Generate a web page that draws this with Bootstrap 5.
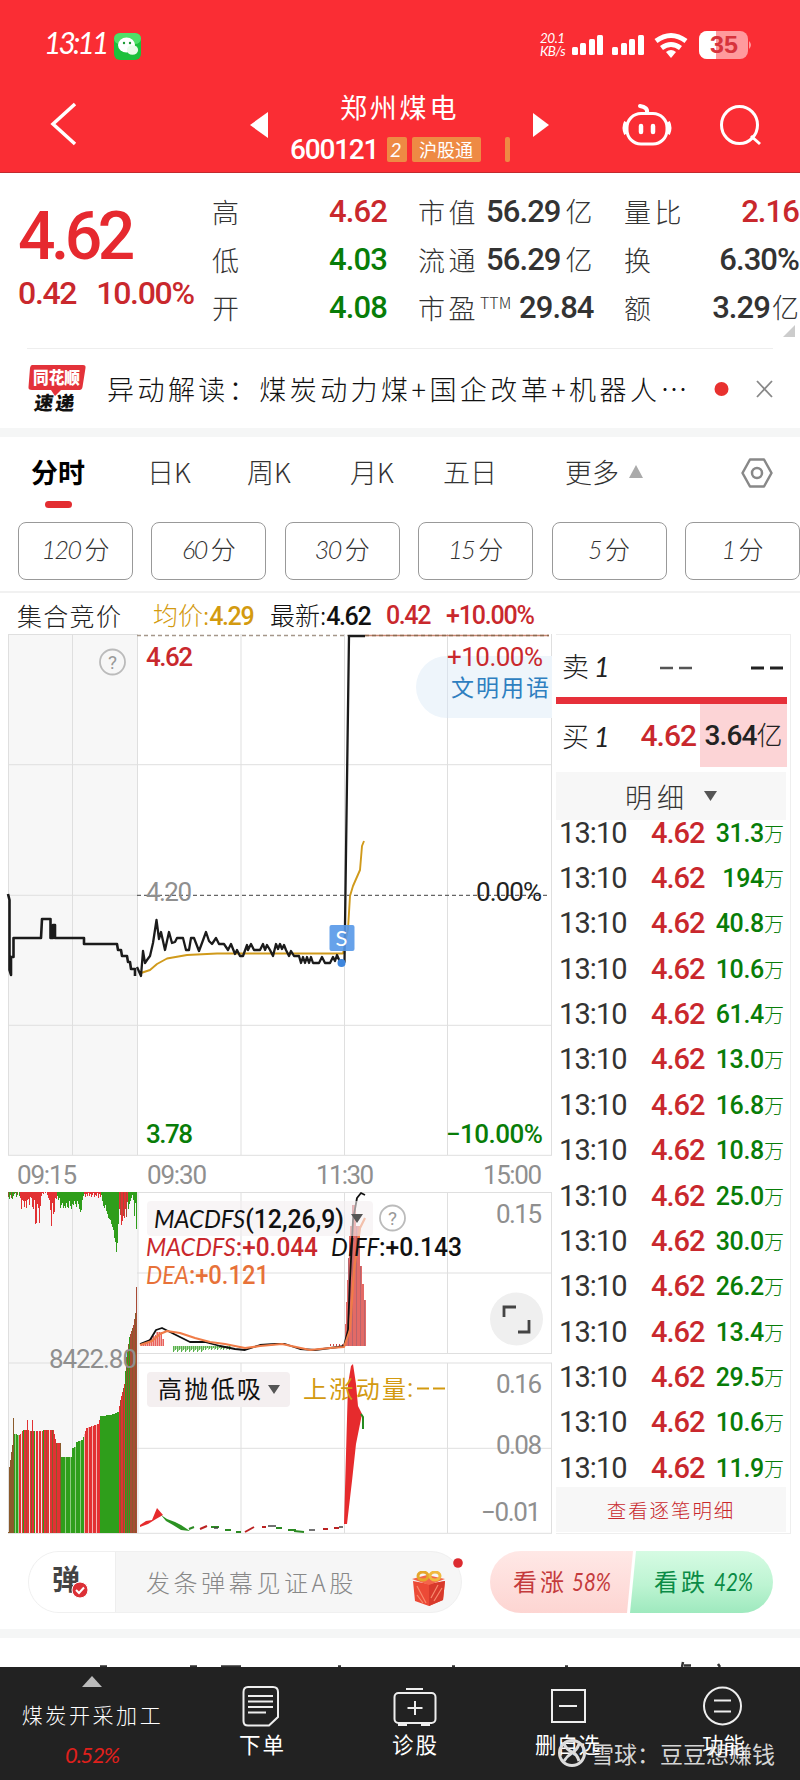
<!DOCTYPE html>
<html lang="zh-CN">
<head>
<meta charset="utf-8">
<meta name="viewport" content="width=device-width, initial-scale=1">
<title>郑州煤电 600121</title>
<link href="https://cdn.jsdelivr.net/npm/bootstrap@5.3.0/dist/css/bootstrap.min.css" rel="stylesheet">
<style>
body{width:800px;height:1780px;overflow:hidden;background:#fff;color:#222;font-family:"Noto Sans CJK SC",sans-serif;font-weight:300;font-size:27px;line-height:1}
svg{display:block;flex:none}
.din{font-family:Roboto,"Noto Sans CJK SC",sans-serif;font-weight:500}
.hand{font-family:Lato,"Noto Sans CJK SC",sans-serif;font-style:italic;font-weight:400}
.up{color:#c9282d}.down{color:#087d08}.gold{color:#d39a10}
.top-red{background:#fa2d34;height:173px;color:#fff;border-bottom:1px solid #c22a2e}
.status-row{height:90px;padding:2px 49px 0 44px}
.title-row{height:83px;position:relative}
.tag{background:#ee8a44;height:25px;font-size:18px;border-radius:2px;overflow:hidden}
.quote{height:175px;padding:16px 0 0 18px;position:relative}
.q-big{font-size:66px;letter-spacing:-4.5px;color:#e6292f;height:72px;padding-top:15px}
.q-sub{font-size:32px;letter-spacing:-1.3px;height:60px;padding-top:16px;white-space:nowrap}
.q-left{width:194px;flex:none}
.q-grid{display:grid;grid-template-columns:117px 89px 206px 80px 95px;grid-auto-rows:48.3px;align-items:center;flex:none;color:#333;white-space:nowrap;margin-top:-2px}
.q-grid .lab{letter-spacing:3.5px}
.q-grid .din{font-size:31px;letter-spacing:-.9px}
.q-grid .din.cn i,.buy i{font-style:normal;font-weight:300;font-size:27px;letter-spacing:0;margin-left:5px}
.corner{position:absolute;left:783px;top:152px}
.rule{height:1px;background:#eee;margin:0 27px}
.notice{height:79px;padding:0 27px 0 27px}
.notice-text{font-size:27px;letter-spacing:3.45px;color:#111;width:584px;margin-left:20px}
.band{height:9px;background:#f5f6f6}
.tabs-row{height:85px;padding:21px 0 0 31px;color:#333;display:grid;grid-template-columns:116px 100px 103px 93px 122px 176px auto}
.tabs-row .on{font-weight:700;color:#000}
.ind{width:27px;height:7px;border-radius:4px;background:#e32d31;margin:16px 0 0 14px}
.period{height:71px;padding-left:18px;gap:18.4px;border-bottom:2px solid #f1f1f1}
.period .btn{width:115px;height:58px;flex:none;border:1px solid #999;border-radius:8px;font-size:25px;color:#333;padding:0 0 5px;line-height:1;font-weight:300}
.period .hand{font-weight:300;letter-spacing:-1.5px;margin-right:4px}
.legend-row{height:41px;padding:3px 0 0 17px;font-size:25px;white-space:nowrap}
.legend-row .din{font-size:25px;letter-spacing:-1.4px}
.main-row{height:900px}
.book{width:235px;margin-left:3px;border:1px solid #eee;border-left:0;height:900px}
.book .r1{height:62px;padding:0 2px 0 6px}
.sellbar{height:7px;background:#e6303a;width:231px}
.buy{height:63px;padding-left:6px;width:231px}
.buy .vol{background:#fcd4d6;width:87px;height:63px;letter-spacing:-.9px;white-space:nowrap;color:#222}
.buy .vol i{margin:0!important;font-size:26px!important}
.dethead{margin-top:5px;height:48px;background:#f7f7f7;width:230px;color:#333}
.trade{height:45.36px;padding:1px 0 0 3px;display:grid;grid-template-columns:92px 57px 76px;align-items:center;font-size:29px;white-space:nowrap}
.trade .t{font-weight:400;color:#333;letter-spacing:-.9px}
.trade .p{letter-spacing:-1px}
.trade .v{font-size:25px;letter-spacing:-.3px;text-align:right}
.trade .v i{font-style:normal;font-weight:300;font-size:20px;letter-spacing:0}
.list{height:681px;margin-top:-10px}
.more{height:45px;background:#f7f7f7;width:230px;font-size:19.5px;letter-spacing:1.9px;margin-top:-4px}
.chat{height:95px;padding:17px 27px 0 28px}
.chat-pill{width:434px;height:62px;border:1px solid #f0f0f0;border-radius:31px;background:#f6f6f6;position:relative}
.chat-l{width:87px;height:60px;background:#fff;border-right:1px solid #eee;border-radius:31px 0 0 31px}
.vote{width:283px;height:62px;margin-left:28px}
.tabbar{height:113px;background:#222;color:#fff;position:relative;font-size:22px}
.tabbar>div{flex:none}
.wm{position:absolute;left:557px;top:71px;color:rgba(255,255,255,.82);font-size:23px;font-weight:400;white-space:nowrap}
</style>
</head>
<body class="d-flex flex-column">
<header class="top-red flex-shrink-0">
  <div class="status-row d-flex align-items-start">
    <span class="hand" style="font-size:30px;padding-top:25px;letter-spacing:-2.900px;width:70px">13:11</span>
    <svg style="margin-top:31px" width="28" height="27" viewBox="0 0 28 27"><rect width="27" height="27" rx="6" fill="#1cc03b"/><rect width="27" height="11" rx="6" fill="#4fe068"/><ellipse cx="12.500" cy="12" rx="8.500" ry="7.600" fill="#fff"/><ellipse cx="18.500" cy="17" rx="5.600" ry="4.800" fill="#eafbea"/><circle cx="10" cy="10" r="1.200" fill="#1a9a33"/><circle cx="16" cy="10" r="1.200" fill="#1a9a33"/></svg>
    <div class="hand ms-auto" style="font-size:13.500px;line-height:13px;padding-top:30px;letter-spacing:-.5px;width:31px">20.1<br>KB/s</div>
    <svg width="180" height="30" viewBox="571 30 180 30" style="margin-top:28px">
      <g fill="#fff"><rect x="572" y="47" width="6" height="8" rx="1.500"/><rect x="580" y="43" width="6" height="12" rx="1.500"/><rect x="589" y="39" width="6" height="16" rx="1.500"/><rect x="597" y="35" width="6" height="20" rx="1.500"/><rect x="612" y="47" width="6" height="8" rx="1.500"/><rect x="621" y="43" width="6" height="12" rx="1.500"/><rect x="629" y="39" width="6" height="16" rx="1.500"/><rect x="638" y="35" width="6" height="20" rx="1.500"/><path d="M671 58l-5-6q5-4 10 0z"/></g>
      <g fill="none" stroke="#fff" stroke-width="5"><path d="M656 41q15-11 30 0M661.500 48q9.500-7 19 0"/></g>
      <rect x="699" y="31" width="49" height="28" rx="8" fill="#ff9a9d"/><path d="M716 31h-9a8 8 0 0 0-8 8v12a8 8 0 0 0 8 8h9z" fill="#fff"/><path d="M749 41q4 4 0 8z" fill="#ff9a9d"/>
      <text x="710" y="53" font-family="Liberation Sans" font-weight="700" font-size="23" textLength="28" lengthAdjust="spacingAndGlyphs" fill="#d7333c">35</text>
    </svg>
  </div>
  <div class="title-row d-flex">
    <svg width="290" height="83" viewBox="0 90 290 83"><path d="M75 104L53 124L75 144" fill="none" stroke="#fff" stroke-width="3.500"/><path d="M268 112V138L250 125z" fill="#fff"/></svg>
    <div style="width:230px">
      <div style="font-size:27px;letter-spacing:2.800px;padding:3px 0 0 50px;font-weight:400">郑州煤电</div>
      <div class="d-flex align-items-center" style="margin-top:17px;height:25px">
        <span class="din" style="font-size:28px;letter-spacing:-1.200px;width:97px">600121</span>
        <span class="tag hand" style="width:20px;padding:2px 0 0 3px;font-size:20px">2</span>
        <span class="tag" style="width:69px;margin-left:5px;padding:3px 0 0 7px;font-weight:400">沪股通</span>
        <span class="tag" style="width:5px;margin-left:24px"></span>
      </div>
    </div>
    <svg width="280" height="83" viewBox="520 90 280 83"><path d="M533 113V137L549 125z" fill="#fff"/>
      <g fill="none" stroke="#fff" stroke-width="3"><rect x="627" y="113.500" width="40" height="30.500" rx="14"/><path d="M647 113q1-6-7-7" stroke-width="4" stroke-linecap="round"/><path d="M626 122q-3 6 0 12M668 122q3 6 0 12" stroke-width="4"/><path d="M641 126v6M653 126v6" stroke-width="4.500" stroke-linecap="round"/><ellipse cx="739.500" cy="125" rx="18" ry="18.500"/><path d="M751 136l9 8"/></g></svg>
  </div>
</header>

<section class="quote d-flex flex-shrink-0">
  <div class="q-left"><div class="q-big din">4.62</div><div class="q-sub din up">0.42<span style="margin-left:20px">10.00%</span></div></div>
  <div class="q-grid">
    <span>高</span><span class="din up">4.62</span><span class="d-flex align-items-center"><span class="lab">市值</span><b class="din cn" style="margin-left:7px">56.29<i>亿</i></b></span><span class="lab">量比</span><span class="din up text-end">2.16</span>
    <span>低</span><span class="din down">4.03</span><span class="d-flex align-items-center"><span class="lab">流通</span><b class="din cn" style="margin-left:7px">56.29<i>亿</i></b></span><span>换</span><span class="din text-end">6.30%</span>
    <span>开</span><span class="din down">4.08</span><span class="d-flex align-items-center"><span class="lab">市盈</span><span style="font-size:16px;margin:-12px 0 0 1px;width:39px">TTM</span><b class="din">29.84</b></span><span>额</span><span class="din cn text-end">3.29<i style="margin-left:2px">亿</i></span>
  </div>
  <svg class="corner" width="12" height="12" viewBox="0 0 12 12"><path d="M12 0V12H0z" fill="#ccc"/></svg>
</section>
<div class="rule flex-shrink-0"></div>
<section class="notice d-flex align-items-center flex-shrink-0">
  <svg width="60" height="50" viewBox="0 0 60 50"><path d="M5 1h51q3 0 2.500 3l-3 19q-.5 3-3 3H34l-6 6-4-6H5q-4 0-3.500-3L3 4q.5-3 2-3z" fill="#e3323a"/><text x="6" y="20" font-size="17" font-weight="900" textLength="47" lengthAdjust="spacingAndGlyphs" fill="#fff">同花顺</text><text transform="skewX(-8)" x="13" y="46" font-size="19" font-weight="900" textLength="40" fill="#111">速递</text></svg>
  <span class="notice-text text-nowrap">异动解读：煤炭动力煤+国企改革+机器人<span style="letter-spacing:0">…</span></span>
  <svg width="64" height="20" viewBox="0 0 64 20" style="margin-left:24px"><circle cx="10.500" cy="10" r="7" fill="#e8312f"/><path d="M46 2l15 16M61 2L46 18" stroke="#888" stroke-width="1.800"/></svg>
</section>
<div class="band flex-shrink-0"></div>
<nav class="tabs-row flex-shrink-0">
  <div class="on">分时<div class="ind"></div></div><div>日K</div><div>周K</div><div>月K</div><div>五日</div>
  <div class="d-flex">更多<svg width="14" height="14" viewBox="0 0 14 14" style="margin:7px 0 0 10px"><path d="M7 0l7 13H0z" fill="#aaa"/></svg></div>
  <svg width="32" height="30" viewBox="0 0 32 30"><path d="M9 1.500h14L30.500 15 23 28.500H9L1.500 15z" fill="none" stroke="#888" stroke-width="2.500" stroke-linejoin="round"/><circle cx="16" cy="15" r="5" fill="none" stroke="#888" stroke-width="2.500"/></svg>
</nav>
<div class="period d-flex flex-shrink-0">
  <button class="btn"><span class="hand">120</span>分</button><button class="btn"><span class="hand">60</span>分</button><button class="btn"><span class="hand">30</span>分</button><button class="btn"><span class="hand">15</span>分</button><button class="btn"><span class="hand">5</span>分</button><button class="btn"><span class="hand">1</span>分</button>
</div>
<div class="legend-row d-flex align-items-center flex-shrink-0">
  <span style="width:136px;letter-spacing:1.300px">集合竞价</span><span class="gold" style="width:117px">均价:<b class="din">4.29</b></span><span style="width:116px;color:#111">最新:<b class="din">4.62</b></span><span class="din up" style="width:60px">0.42</span><span class="din up" style="letter-spacing:-1.200px">+10.00%</span>
</div>

<main class="main-row d-flex flex-shrink-0">
<svg id="chart" width="553" height="900" viewBox="0 634 553 900" font-family="Roboto,'Noto Sans CJK SC'" font-weight="400" font-size="26">
  <path d="M8 634.500H137.500V1155H8zM8 1192H137.500V1533.500H8z" fill="#f7f7f7"/>
  <g fill="none" stroke="#dfdfdf" stroke-width="1"><path d="M8.500 634V1155M72.500 634V1155M137.500 634V1155M241 634V1155M344.500 634V1155M447.500 634V1155M551.500 634V1155M8 634.500H137M8 764.700H552M8 895.300H137M8 1025.300H552M8 1155.300H552"/>
  <path d="M8.500 1192V1533M72.500 1192V1533M241 1192V1353M344.500 1192V1353M447.500 1192V1353M551.500 1192V1353M137 1192.500H552M137 1273H552M137 1353.500H552M8 1363H552M241 1363V1533M344.500 1363V1533M447.500 1363V1533M551.500 1363V1533M137 1448.300H552M8 1533.300H552"/></g>
  <path d="M552 656H447a31 31 0 0 0 0 62H552z" fill="#eef5fb"/><path d="M447.500 656V718" stroke="#dbe2ea"/>
  <path d="M137 635.500H349" stroke="#a5978a" stroke-width="1.500" stroke-dasharray="4 3"/><path d="M365 635.500H549" stroke="#c98873" stroke-width="1.500"/><path d="M365 635.500H549" stroke="#8d6b50" stroke-width="1.500" stroke-dasharray="4 3"/>
  <path d="M137 895.300H549" stroke="#666" stroke-width="1.200" stroke-dasharray="4 3"/>
  <g id="bars" shape-rendering="crispEdges"></g>
  <path d="M138 1192V1533" stroke="#dfdfdf"/>
  <g fill="none" stroke-linejoin="round">
    <path stroke="#d09a1b" stroke-width="1.900" d="M141 973L150 970 157 964 167 958.500 187 955 217 953.500H343L348 929 350 896 353 886 360 870 362 846 364 841"/>
    <path stroke="#1b1b1b" stroke-width="2.600" d="M8 894L9.500 900V970L11 975V957H13.500V938H41L42 919H50.500V938H53V925H55V938H84V944H117L118 950H121L122 956H127L128 962H130L131 969H135V976"/>
    <path stroke="#1b1b1b" stroke-width="2.300" d="M137 967L141 976 143 951 145 963 147 960 150 956 153 943 156.500 920 159 939 161 932 165 950 169 932 172 943 175 942 177 938H183L186 950H189L191 938H194L199 951 202 943 206 932 209 941 212 944 216 938 219 944H224L228 950 231 944 235 954 237 950 240 956H243L247 945 248 950 251 944 254 950H260L263 944 265 950 267 945 270 950 273 956 276 944 278 949 280 944 282 949 284 945 286 950 289 956 291 951 294 956H299L301 963 303 957 305 963 307 957 309 963 311 957 313 963H319L322 957 325 963H330L333 957 335 961 337 955 340 962H344.500L349 636H365"/>
    <path stroke="#111" stroke-width="1.800" d="M140 1344L150 1340 156 1330 162 1328 170 1332 180 1337 190 1342 205 1342 220 1346 235 1349 245 1350 260 1345 275 1344 285 1344 300 1349 315 1350 338 1347 344 1346 348 1330 350 1280 353 1220 357 1198 361 1193 365 1195"/>
    <path stroke="#f07c48" stroke-width="2.200" d="M140 1345L152 1341 160 1334 167 1331 180 1333 195 1338 210 1342 225 1344 245 1348 260 1346 282 1344 296 1347 310 1350 330 1348 344 1347 350 1330 354 1270 360 1228 365 1218"/>
  </g>
  <path d="M140 1525l6-4 6-1 5-12 6 7-7 4-8 5-8 3zM344 1524l4-140 3-18 2-2 3 20 2 22 4 8-6 30-4 37-5 43z" fill="#e62b2d"/>
  <path d="M161 1515l6 4 8 3 6 3 9 6-9-1-8-5-7-4z" fill="#2b9222"/><path d="M361 1414l2 3v12" fill="none" stroke="#268b20" stroke-width="2"/>
  <g fill="none" stroke-width="2"><path stroke="#2b8a22" d="M189 1529l5-2M211 1527h8M225 1530h6M236 1532h5M276 1528h6M288 1530h8M294 1531l10 1"/><path stroke="#b22" d="M200 1529l7-3M245 1532l9-5M262 1527h4M323 1529h5M334 1528h5"/><path stroke="#444" stroke-width="1.400" d="M214 1528h4M268 1526h8M309 1530h6M339 1527h4"/></g>
  <g fill="#8f8f8f"><text x="17" y="1184" textLength="60">09:15</text><text x="147" y="1184" textLength="60">09:30</text><text x="316" y="1184" textLength="58">11:30</text><text x="483" y="1184" textLength="59">15:00</text>
  <text x="146" y="901" textLength="46">4.20</text><text x="496" y="1223" textLength="46">0.15</text><text x="496" y="1393" textLength="46">0.16</text><text x="496" y="1454" textLength="46">0.08</text><text x="481" y="1521" textLength="60">−0.01</text><text x="49" y="1368" textLength="88">8422.80</text></g>
  <g font-weight="500"><text x="146" y="666" textLength="47" fill="#c9282d">4.62</text><text x="146" y="1143" textLength="47" fill="#087d08">3.78</text><text x="446" y="1143" textLength="97" fill="#087d08">−10.00%</text></g>
  <text x="447" y="666" textLength="96" fill="#c9282d">+10.00%</text><text x="476" y="901" textLength="66" fill="#222">0.00%</text>
  <text x="451" y="696" font-size="23" textLength="98" font-weight="400" fill="#2e7fc0">文明用语</text>
  <g fill="none" stroke="#bbb" stroke-width="1.800"><circle cx="112.500" cy="662" r="12.500"/><circle cx="392.500" cy="1218" r="12.500"/></g>
  <g fill="#999" font-size="19" text-anchor="middle"><text x="112.500" y="669">?</text><text x="392.500" y="1225">?</text></g>
  <rect x="329.500" y="925" width="25" height="26" rx="2" fill="#5798e8" fill-opacity=".9"/><text x="335.500" y="946" font-family="Lato" font-size="22" fill="#fff">S</text><circle cx="341.500" cy="963" r="4" fill="#3e86dd"/>
  <g fill="#f4eff0" fill-opacity=".6"><rect x="147" y="1201" width="226" height="35" rx="4"/><rect x="147" y="1372" width="143" height="35" rx="4" fill-opacity="1"/></g>
  <path d="M351 1214h12l-6 9zM268 1385h12l-6 9z" fill="#555"/>
  <text x="154" y="1228" fill="#111" textLength="190" lengthAdjust="spacingAndGlyphs"><tspan font-family="Lato" font-style="italic" font-size="25">MACDFS</tspan><tspan font-weight="500">(12,26,9)</tspan></text>
  <text x="146" y="1256" fill="#c9282d" textLength="172" lengthAdjust="spacingAndGlyphs"><tspan font-family="Lato" font-style="italic" font-size="25">MACDFS</tspan><tspan font-weight="500">:+0.044</tspan></text>
  <text x="331" y="1256" fill="#111" textLength="131" lengthAdjust="spacingAndGlyphs"><tspan font-family="Lato" font-style="italic" font-size="25">DIFF</tspan><tspan font-weight="500">:+0.143</tspan></text>
  <text x="146" y="1284" fill="#e77239" textLength="123" lengthAdjust="spacingAndGlyphs"><tspan font-family="Lato" font-style="italic" font-size="25">DEA</tspan><tspan font-weight="500">:+0.121</tspan></text>
  <text x="158" y="1398" font-size="24" font-weight="400" textLength="103" fill="#111">高抛低吸</text>
  <text x="303" y="1398" font-size="24" textLength="103" fill="#d39a10">上涨动量</text><text x="407" y="1397" fill="#d39a10">:</text><path d="M417 1388.500h12M433 1388.500h12" stroke="#d39a10" stroke-width="2.200"/>
  <circle cx="516.500" cy="1319" r="26.500" fill="#efefef"/><path d="M504 1317V1307H516M518 1332H529V1320" fill="none" stroke="#444" stroke-width="2.800"/>
</svg>
<aside class="book">
  <div class="r1 d-flex align-items-center"><span>卖<span class="hand" style="margin-left:5px">1</span></span>
    <svg width="124" height="4" viewBox="0 0 124 4" style="margin:3px 5px 0 auto"><path d="M1 2h13M20 2h13" stroke="#555" stroke-width="2.500"/><path d="M92 2h13M111 2h13" stroke="#222" stroke-width="3"/></svg></div>
  <div class="sellbar"></div>
  <div class="buy d-flex align-items-center"><span>买<span class="hand" style="margin-left:5px">1</span></span><span class="din up ms-auto" style="font-size:30px;letter-spacing:-1px;padding-right:4px">4.62</span><span class="vol din d-flex align-items-center justify-content-center" style="font-size:28px">3.64<i>亿</i></span></div>
  <div class="dethead d-flex align-items-center" style="padding-left:69px;letter-spacing:5px">明细<svg width="13" height="10" viewBox="0 0 13 10" style="margin-left:15px"><path d="M0 0h13l-6.500 10z" fill="#555"/></svg></div>
  <div class="list" id="list"></div>
  <div class="more d-flex align-items-center justify-content-center up">查看逐笔明细</div>
</aside>
</main>

<section class="chat d-flex flex-shrink-0">
  <div class="chat-pill d-flex align-items-center">
    <div class="chat-l"><svg width="86" height="60" viewBox="29 1552 86 60"><text x="52" y="1590" font-size="28" font-weight="700" fill="#444">弹</text><circle cx="80" cy="1590" r="8" fill="#dc3036" stroke="#fff"/><path d="M76 1590l3 3 5-5.500" fill="none" stroke="#fff" stroke-width="2"/></svg></div>
    <span style="font-size:24px;letter-spacing:3.600px;color:#888;margin-left:30px">发条弹幕见证A股</span>
    <svg width="34" height="36" viewBox="0 0 34 36" style="position:absolute;left:383px;top:19px"><path d="M1 10l16 3 16-3-2 19-14 6-14-5z" fill="#ec4a36"/><path d="M17 13l16-3-2 19-14 6z" fill="#d83a2c"/><path d="M0 8l15-4 18 4-16 6z" fill="#f4644a"/><path d="M22 30l8-13M19 27l7-13M5 15l9 17M5 24l6 8" stroke="#f88a6d" stroke-width="1.200"/><ellipse cx="11" cy="5" rx="5" ry="4" fill="none" stroke="#e5a62c" stroke-width="3"/><ellipse cx="23" cy="5" rx="5" ry="4" fill="none" stroke="#f0b93f" stroke-width="3"/></svg>
    <svg width="10" height="10" viewBox="0 0 10 10" style="position:absolute;left:424px;top:6px"><circle cx="5" cy="5" r="4.800" fill="#dc2b30"/></svg>
  </div>
  <svg class="vote" viewBox="490 1551 283 62" font-size="24" font-weight="400"><defs><linearGradient id="r" x2="0" y2="1"><stop offset="0" stop-color="#ffe8e6"/><stop offset="1" stop-color="#fdd5d2"/></linearGradient><linearGradient id="g" x2="0" y2="1"><stop offset="0" stop-color="#d6fbe3"/><stop offset=".55" stop-color="#bdf4d2"/><stop offset="1" stop-color="#9ee9be"/></linearGradient></defs>
  <path d="M633 1551H521a31 31 0 0 0 0 62H627z" fill="url(#r)"/><path d="M636 1551H742a31 31 0 0 1 0 62H630z" fill="url(#g)"/>
  <g fill="#c43a3c"><text x="513" y="1591" textLength="51">看涨</text><text x="572" y="1591" font-family="Lato" font-style="italic" font-size="25" textLength="39" lengthAdjust="spacingAndGlyphs">58%</text></g><g fill="#0b8b46"><text x="654" y="1591" textLength="51">看跌</text><text x="714" y="1591" font-family="Lato" font-style="italic" font-size="25" textLength="39" lengthAdjust="spacingAndGlyphs">42%</text></g></svg>
</section>
<div class="band flex-shrink-0"></div>
<svg width="800" height="29" viewBox="0 1638 800 29"><path d="M100 1666.500h7M190 1666.500h7M221 1666.500h20M338 1666.500h3M452 1666.500h3M565 1666.500h3M683 1662l-1 5M684 1665.500h7M718 1664l2 3" stroke="#333" stroke-width="2.500"/></svg>
<footer class="tabbar d-flex flex-shrink-0">
  <div class="text-center d-flex flex-column align-items-center" style="width:184px;padding-top:9px"><svg width="20" height="11" viewBox="0 0 20 11"><path d="M10 0l10 11H0z" fill="#bbb"/></svg><span style="font-size:21px;letter-spacing:2.600px;margin:17px 0 0 1px">煤炭开采加工</span><span class="hand" style="color:#e0201c;margin-top:19px;letter-spacing:-1.200px">0.52%</span></div>
  <svg width="616" height="113" viewBox="184 1667 616 113" font-size="21.500" fill="#fff" font-weight="400">
    <g fill="none" stroke="#eee" stroke-width="2"><path d="M248 1687H273q5 0 5 5V1717L269 1725.500H248q-4.500 0-4.500-4.500V1692q0-5 4.500-5zM248 1696H273M248 1701.500H273M248 1707H273M248 1712.500H266"/><rect x="394.500" y="1693" width="41" height="30" rx="4"/><path d="M406 1689H423M415 1701V1715M407.500 1708H422.500"/><path d="M398 1724.500H407M421 1724.500H430" stroke-width="3"/><rect x="552" y="1690" width="33" height="32"/><path d="M559 1706H577"/><circle cx="722.500" cy="1706" r="18.500"/><path d="M714 1700.500H731M714 1711.500H731"/></g>
    <text x="239" y="1753" textLength="45">下单</text><text x="392" y="1753" textLength="45">诊股</text><text x="535" y="1753" textLength="65">删自选</text><text x="702" y="1753" textLength="43">功能</text>
  </svg>
  <div class="wm d-flex align-items-center"><svg width="30" height="30" viewBox="0 0 30 30" class="me-1"><g fill="none" stroke="#ddd" stroke-width="3"><circle cx="15" cy="15" r="12.500"/><path d="M7 6q3 6 8 8t7 9M22 6q-2 6-7 9t-8 8"/></g></svg>雪球：豆豆想赚钱</div>
</footer>

<script src="https://cdn.jsdelivr.net/npm/bootstrap@5.3.0/dist/js/bootstrap.bundle.min.js"></script>
<script>
const amounts=['31.3','194','40.8','10.6','61.4','13.0','16.8','10.8','25.0','30.0','26.2','13.4','29.5','10.6','11.9'];
document.getElementById('list').innerHTML=amounts.map(a=>`<div class="trade din"><span class="t">13:10</span><span class="p up">4.62</span><span class="v down">${a}<i>万</i></span></div>`).join('');

const R='#e23133',G='#2f9e1b',B='#8a5a2b',P='#a84a35';
const bars=[];
const lerp=(pts,x)=>{for(let i=1;i<pts.length;i++)if(x<=pts[i][0]){const[a,b]=pts[i-1],[c,d]=pts[i];return b+(d-b)*(x-a)/(c-a)}return pts[pts.length-1][1]};
const add=(x,y,h,c,w=1)=>bars.push(`<rect x="${x}" y="${y}" width="${w}" height="${h}" fill="${c}"/>`);
/* auction volume, upward from the bottom edge */
const vol=[[8,1532],[9,1467],[12,1445],[13,1418],[14,1434],[19,1435],[23,1430],[35,1431],[50,1430],[53,1430],[56,1443],[60,1443],[61,1457],[71,1457],[72,1448],[75,1447],[76,1442],[82,1440],[86,1428],[98,1424],[100,1416],[110,1415],[118,1412],[120,1400],[124,1384],[126,1357],[129,1337],[133,1325],[135,1313],[136,1287],[138,1285]];
const tone=x=>x<14?B:x<19?(x%3?G:'#9ccf8e'):x<51?'RRwRGRRPRRwRBRRGwRRw'.charAt((x-19)%20):x<61?(x%4?R:B):x<84?(x%5?G:'#8ecb80'):x<100?(x%4?R:'#f3b3b3'):x<119?G:x<125?(x%3?R:B):x<130?(x%2?G:B):(x%3?P:B);
const map={R,G,B,P,w:'#f2e5e5'};
for(let x=8;x<137;x++){let y=lerp(vol,x);const c=map[tone(x)]||tone(x);if(x===27||x===32)y=1420;add(x,y,1533-y,c)}
/* unmatched volume, downward from the top edge */
const down=[5,7,3,6,7,4,2,1,5,3,0,4,6,17,8,9,15,9,16,8,7,13,5,6,15,17,8,32,31,12,16,31,14,4,1,2,0,1,0,3,6,8,18,34,11,22,20,6,7,4,8,6,16,13,11,16,14,16,11,15,16,9,14,17,12,13,9,12,15,9,12,17,20,18,8,4,2,5,2,4,1,4,2,5,3,1,5,3,4,1,6,2,5,3,9,14,16,13,19,22,26,27,28,32,35,38,46,50,60,51,32,17,23,33,29,24,26,17,25,10,17,12,9,6,3,8,24,11,37];
down.forEach((h,i)=>{const x=8+i;const c=x<20?(i%3?G:B):x<57?R:x<84?G:x<101?R:x<119?G:x<128?(x%3?R:P):G;if(h)add(x,1192,h,c)});
/* MACD histogram */
for(let x=141;x<164;x++){const h=x<156?(x-140)*.75:x<162?14:7;add(x,1346-h,h,x%2?'#e8605c':'#f3aaa4')}
for(let x=173;x<231;x++){const h=x<204?3+((x*7)%4):2+((x*5)%3);add(x,1346,h,x%2?'#58b04c':'#a5d69c')}
for(let x=330;x<344;x+=3)add(x,1344,2,'#c44');
for(let x=345;x<366;x++){const y=x<350?1346-(x-344)*22:x<352?1226:x<356?1205:x<360?1226:x<362?1266:x<364?1284:1300;add(x,y,1346-y,x%4?'#e36a66':'#b9636b')}
document.getElementById('bars').innerHTML=bars.join('');
</script>
</body>
</html>
